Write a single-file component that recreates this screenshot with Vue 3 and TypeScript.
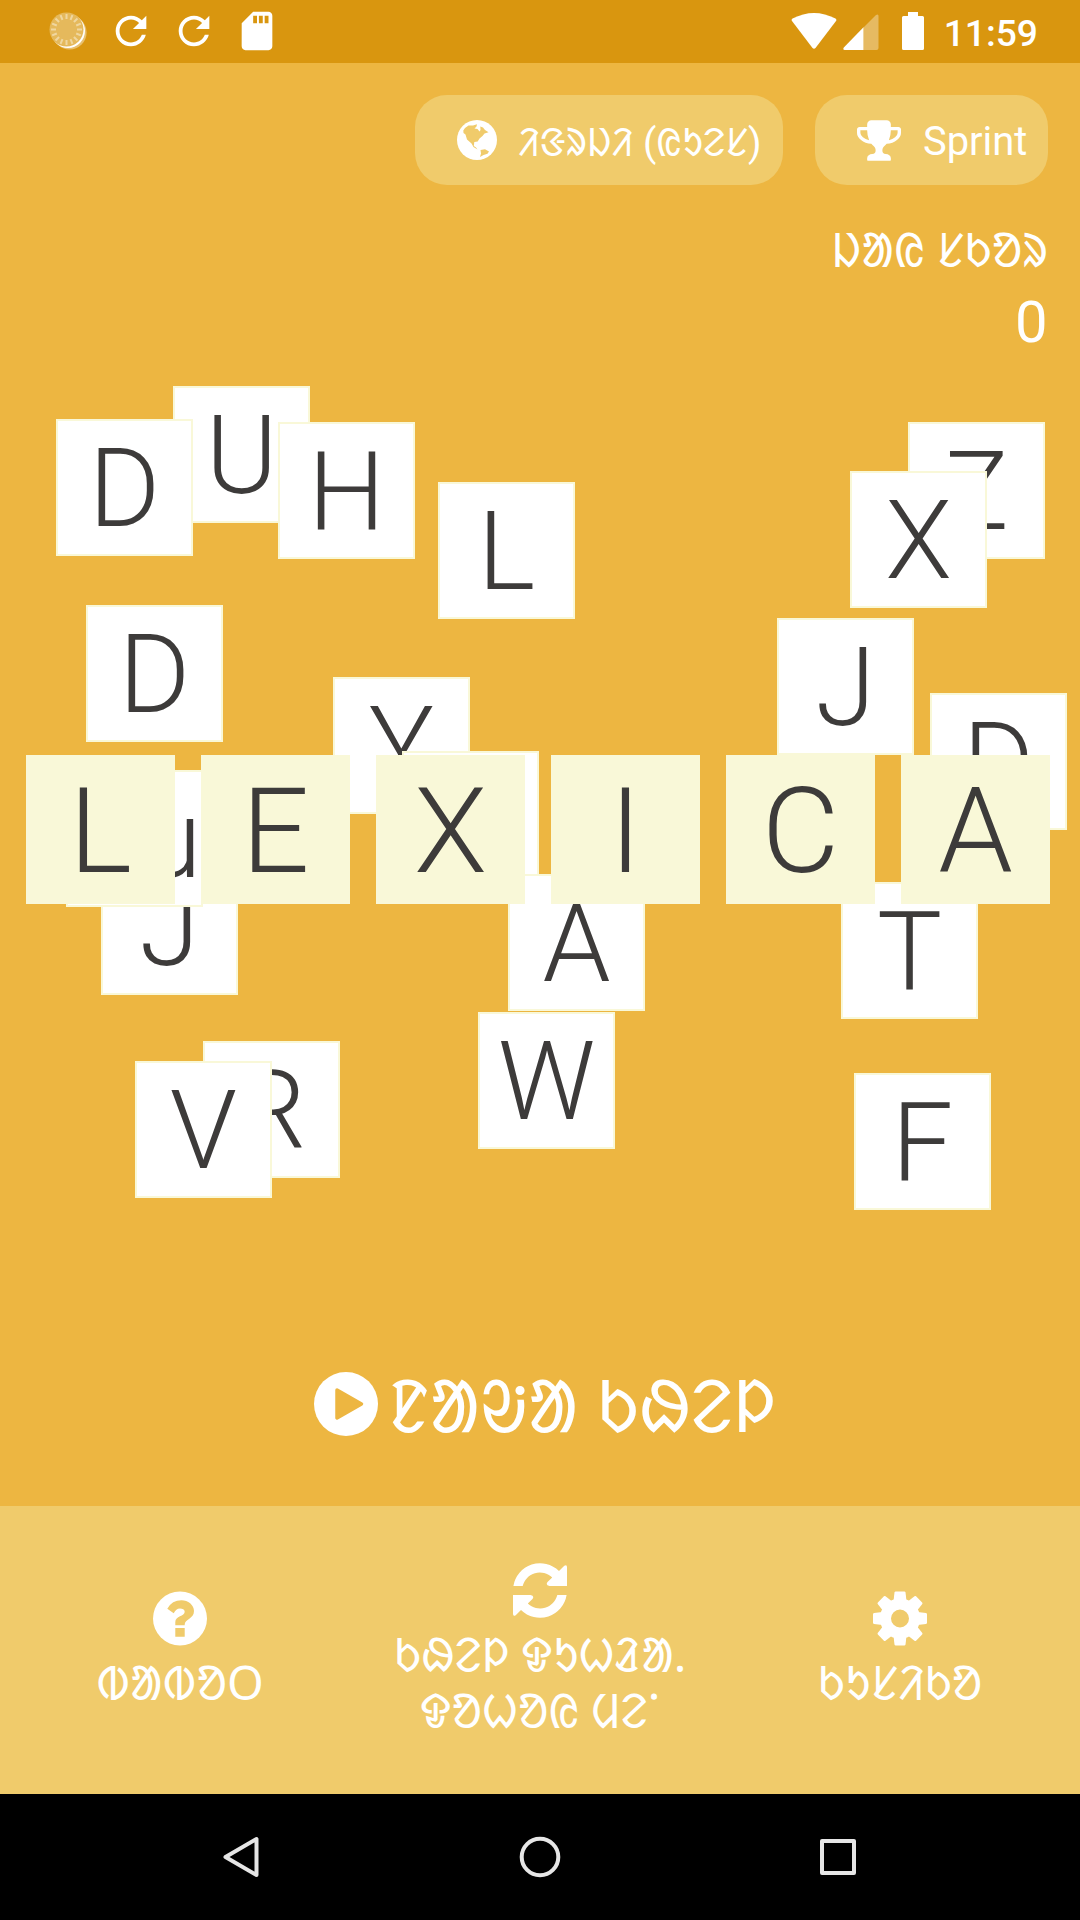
<script setup lang="ts">
interface Tile {
  letter: string
  x: number
  y: number
}

const tiles: Tile[] = [
  { letter: 'U', x: 173, y: 386 },
  { letter: 'D', x: 56, y: 419 },
  { letter: 'H', x: 278, y: 422 },
  { letter: 'L', x: 438, y: 482 },
  { letter: 'Z', x: 908, y: 422 },
  { letter: 'X', x: 850, y: 471 },
  { letter: 'D', x: 86, y: 605 },
  { letter: 'J', x: 777, y: 618 },
  { letter: 'Y', x: 333, y: 677 },
  { letter: 'D', x: 930, y: 693 },
  { letter: '', x: 402, y: 751 },
  { letter: 'J', x: 101, y: 858 },
  { letter: 'Qu', x: 66, y: 770 },
  { letter: 'A', x: 508, y: 874 },
  { letter: 'T', x: 841, y: 882 },
  { letter: 'W', x: 478, y: 1012 },
  { letter: 'R', x: 203, y: 1041 },
  { letter: 'V', x: 135, y: 1061 },
  { letter: 'F', x: 854, y: 1073 },
]

const title: string[] = ['L', 'E', 'X', 'I', 'C', 'A']
const teeth: number[] = [0, 45, 90, 135, 180, 225, 270, 315]
const ticks: number[] = Array.from({ length: 16 }, (_, i) => i * 22.5)
const refresh =
  'M17.65 6.35C16.2 4.9 14.21 4 12 4c-4.42 0-7.99 3.58-7.99 8s3.57 8 7.99 8c3.73 0 6.84-2.55 7.73-6h-2.08c-.82 2.33-3.04 4-5.65 4-3.31 0-6-2.69-6-6s2.69-6 6-6c1.66 0 3.14.69 4.22 1.78L13 11h7V4l-2.35 2.35z'
const syncArrow =
  'M.4 23A27 27 0 0 1 46 8L51.3 2.8Q54 1.2 54 4.2V23H36.5Q32.3 22.3 34.5 19L39.2 14.4A17.8 17.8 0 0 0 9.7 23Z'
</script>

<template>
  <div class="screen">
    <header class="status">
      <div class="status-left">
        <svg width="46" height="46" viewBox="0 0 46 46">
          <circle cx="24.6" cy="24.6" r="17" fill="#fff" opacity=".4" />
          <circle cx="23" cy="23" r="17" fill="#fff" />
          <circle cx="21.500" cy="21.500" r="17" fill="#e5b95c" />
          <path
            v-for="a in ticks"
            :key="a"
            d="M21.500 6v5"
            stroke="#f0d7a0"
            stroke-width="2"
            :transform="`rotate(${a} 21.5 21.5)`"
          />
        </svg>
        <svg width="46" height="46" viewBox="0 0 24 24"><path fill="#fff" :d="refresh" /></svg>
        <svg width="46" height="46" viewBox="0 0 24 24"><path fill="#fff" :d="refresh" /></svg>
        <svg width="46" height="46" viewBox="0 0 24 24">
          <path
            fill="#fff"
            d="M18 2h-8L4.02 8 4 20c0 1.1.9 2 2 2h12c1.1 0 2-.9 2-2V4c0-1.1-.9-2-2-2zm-6 6h-2V4h2v4zm3 0h-2V4h2v4zm3 0h-2V4h2v4z"
          />
        </svg>
      </div>
      <div class="status-right">
        <svg class="wifi" width="46" height="38" viewBox="0 0 46 38">
          <path fill="#fff" d="M1 9Q0 7.6 1.5 6.6Q23-4.600 44.500 6.600Q46 7.600 45 9L24.500 36Q23 37.500 21.500 36Z" />
        </svg>
        <svg class="signal" width="36" height="38" viewBox="0 0 36 38">
          <path fill="#fff" opacity=".35" d="M20.500 15.500L33 3Q35.500 1.500 35.500 4V36Q35.500 38 33.500 38H20.500Z" />
          <path fill="#fff" d="M20.500 15.300V38H1.800Q-.5 38 .8 35.500Z" />
        </svg>
        <svg class="battery" width="22" height="38" viewBox="0 0 22 38">
          <path fill="#fff" d="M6 0H16V4H20.500Q22 4 22 5.500V36.500Q22 38 20.500 38H1.500Q0 38 0 36.500V5.500Q0 4 1.500 4H6Z" />
        </svg>
        <span class="time">11:59</span>
      </div>
    </header>

    <main class="board">
      <div class="chips">
        <div class="chip chip-lang">
          <svg width="40" height="40" viewBox="0 0 40 40">
            <circle cx="20" cy="20" r="20" fill="#fff" />
            <path
              fill="#f0cb6b"
              d="M6.300 10.500L8 8L11.500 5.500L16 5.500L20 4.300L19.500 6.500L17.500 8.500L20.500 9L22.500 11.500L23.500 10L23.300 6.500L26 7.500L28 10L31.500 12.300L27.500 13.500L25.500 16L22.500 18.500L20.700 21.500L17.300 22L16.800 26L19 27.500L20.500 29.500L16.500 27L14.500 23.500L10 19.500L8.500 14.500L6.500 13Z"
            />
            <path fill="#f0cb6b" d="M23.500 30L28 29.300L32 31.500L30.500 33.800L26.500 35L23 37L24 33.500Z" />
          </svg>
          <span class="ol lang-text">ᱤᱝᱨᱡᱤ (ᱭᱩᱮᱥ)</span>
        </div>
        <div class="chip chip-mode">
          <svg width="44" height="41" viewBox="64 128 1664 1536">
            <path
              fill="#fff"
              d="M522 883q-74-162-74-371h-256v96q0 78 94.500 162t235.500 113zm1078-275v-96h-256q0 209-74 371 141-29 235.500-113t94.500-162zm128-128v128q0 71-41.500 143t-112 130-173 97.500-215.500 44.500q-42 54-95 95-38 34-52.500 72.500t-14.500 89.500q0 54 30.500 91t97.500 37q75 0 133.500 45.500t58.500 114.500v64q0 14-9 23t-23 9h-832q-14 0-23-9t-9-23v-64q0-69 58.500-114.500t133.500-45.500q67 0 97.500-37t30.500-91q0-51-14.500-89.500t-52.500-72.500q-53-41-95-95-113-5-215.500-44.500t-173-97.500-112-130-41.500-143v-128q0-40 28-68t68-28h288v-96q0-66 47-113t113-47h576q66 0 113 47t47 113v96h288q40 0 68 28t28 68z"
            />
          </svg>
          <span class="mode-text">Sprint</span>
        </div>
      </div>

      <div class="score">
        <div class="ol score-label">ᱡᱟᱭ ᱥᱠᱚᱨ</div>
        <div class="score-value">0</div>
      </div>

      <div
        v-for="(t, i) in tiles"
        :key="i"
        class="tile"
        :style="{ left: t.x + 'px', top: t.y + 'px' }"
      >
        {{ t.letter }}
      </div>

      <div class="title">
        <div v-for="l in title" :key="l" class="title-tile">{{ l }}</div>
      </div>

      <div class="play">
        <svg width="64" height="64" viewBox="0 0 64 64">
          <circle cx="32" cy="32" r="32" fill="#fff" />
          <path
            d="M23 18L47.500 31.900L23 46Z"
            fill="#edb641"
            stroke="#edb641"
            stroke-width="3.500"
            stroke-linejoin="round"
          />
        </svg>
        <span class="ol play-text">ᱱᱟᱶᱟ ᱠᱷᱮᱞ</span>
      </div>
    </main>

    <footer class="menu">
      <div class="item">
        <svg width="54" height="55" viewBox="0 0 54 55">
          <circle cx="27" cy="27.500" r="27" fill="#fff" />
          <path
            fill="#f0cb6b"
            d="M14.300 17.700Q19 9.300 28.500 9.300C35 9.300 41 14 41 20C41 28 31.700 28 31.700 33.500V34.300H22.300V31C22.300 25 31.700 25.500 31.700 20.800C31.700 18.500 29.500 17.500 27 17.500C24 17.500 22.500 19.500 20.700 22.300ZM22.300 37h9.400v8.700h-9.400Z"
          />
        </svg>
        <span class="ol label">ᱵᱟᱵᱚᱛ</span>
      </div>
      <div class="item">
        <svg width="54" height="55" viewBox="0 0 54 55" fill="#fff">
          <path :d="syncArrow" />
          <path :d="syncArrow" transform="rotate(180 27 27.500)" />
        </svg>
        <span class="ol label">ᱠᱷᱮᱞ ᱫᱩᱦᱲᱟᱹ<br />ᱫᱚᱦᱚᱭ ᱢᱮᱸ</span>
      </div>
      <div class="item">
        <svg width="54" height="55" viewBox="0 0 54 55" fill="#fff">
          <circle cx="27" cy="27.500" r="14.500" fill="none" stroke="#fff" stroke-width="11" />
          <path
            v-for="a in teeth"
            :key="a"
            d="M20.500 10L21.500 1.500Q21.700 .5 22.700 .5H31.300Q32.300 .5 32.500 1.500L33.500 10Z"
            :transform="`rotate(${a} 27 27.500)`"
          />
        </svg>
        <span class="ol label">ᱠᱩᱥᱤᱠᱚ</span>
      </div>
    </footer>

    <nav class="nav">
      <svg width="1080" height="126" viewBox="0 0 1080 126" fill="none" stroke="#e6e6e6" stroke-width="4" stroke-linejoin="round">
        <path d="M256.500 45V81L225.500 63Z" />
        <circle cx="540" cy="63" r="18.300" />
        <rect x="822" y="47" width="32" height="32" />
      </svg>
    </nav>
  </div>
</template>

<style>
body {
  margin: 0;
}
</style>

<style scoped>
.screen {
  position: relative;
  width: 1080px;
  height: 1920px;
  display: flex;
  flex-direction: column;
  overflow: hidden;
  background: #edb641;
  color: #fff;
  font-family: Roboto, 'Liberation Sans', sans-serif;
}
svg {
  display: block;
  flex: none;
}
.ol {
  font-family: Roboto, 'Noto Sans Ol Chiki', 'Noto Sans', sans-serif;
  white-space: nowrap;
}
.status {
  height: 63px;
  flex: none;
  display: flex;
  justify-content: space-between;
  background: #d9960f;
}
.status-left {
  display: flex;
  gap: 17px;
  padding: 8px 0 0 45px;
}
.status-right {
  display: flex;
  align-items: flex-start;
  padding: 12px 42px 0 0;
}
.signal {
  margin-left: 6px;
}
.battery {
  margin-left: 23px;
}
.time {
  margin-left: 20px;
  font-size: 37.2px;
  line-height: 42px;
  font-weight: 500;
}
.board {
  height: 1443px;
  flex: none;
  display: flex;
  flex-direction: column;
}
.chips {
  display: flex;
  justify-content: flex-end;
  gap: 32px;
  padding: 32px 32px 0;
}
.chip {
  box-sizing: border-box;
  height: 90px;
  padding-left: 42px;
  display: flex;
  align-items: center;
  border-radius: 32px;
  background: #f0cb6b;
}
.chip-lang {
  width: 368px;
}
.chip-mode {
  width: 233px;
}
.lang-text {
  margin-left: 21px;
  font-size: 38.9px;
}
.mode-text {
  margin-left: 22px;
  padding-top: 2px;
  font-size: 39.9px;
}
.score {
  padding: 35px 32px 0;
  height: 161px;
  text-align: right;
}
.score-label {
  font-size: 47.25px;
  line-height: 62px;
}
.score-value {
  padding-right: 0.5px;
  font-size: 58px;
  line-height: 80px;
}
.tile,
.title-tile {
  box-sizing: border-box;
  display: flex;
  align-items: center;
  justify-content: center;
  color: #3d3b3a;
  font-weight: 300;
}
.tile {
  position: absolute;
  width: 137px;
  height: 137px;
  padding-top: 3px;
  border: 2px solid #f9f8d8;
  background: #fff;
  font-size: 109px;
  line-height: 130px;
}
.title {
  position: relative;
  z-index: 1;
  display: flex;
  gap: 26px;
  margin-top: 374px;
  padding-left: 26px;
}
.title-tile {
  width: 149px;
  height: 149px;
  padding-top: 3px;
  background: #f9f8d8;
  font-size: 119.5px;
  line-height: 146px;
}
.play {
  height: 64px;
  margin-top: 468px;
  padding-left: 314px;
  display: flex;
  align-items: center;
}
.play-text {
  margin-left: 10px;
  padding-top: 6px;
  font-size: 73px;
  line-height: 64px;
}
.menu {
  height: 288px;
  flex: none;
  display: flex;
  align-items: center;
  background: #f0cb6b;
}
.item {
  width: 360px;
  display: flex;
  flex-direction: column;
  align-items: center;
}
.label {
  margin: 10px 0 -2px;
  font-size: 47.1px;
  line-height: 56px;
  text-align: center;
}
.nav {
  height: 126px;
  flex: none;
  background: #000;
}
</style>
